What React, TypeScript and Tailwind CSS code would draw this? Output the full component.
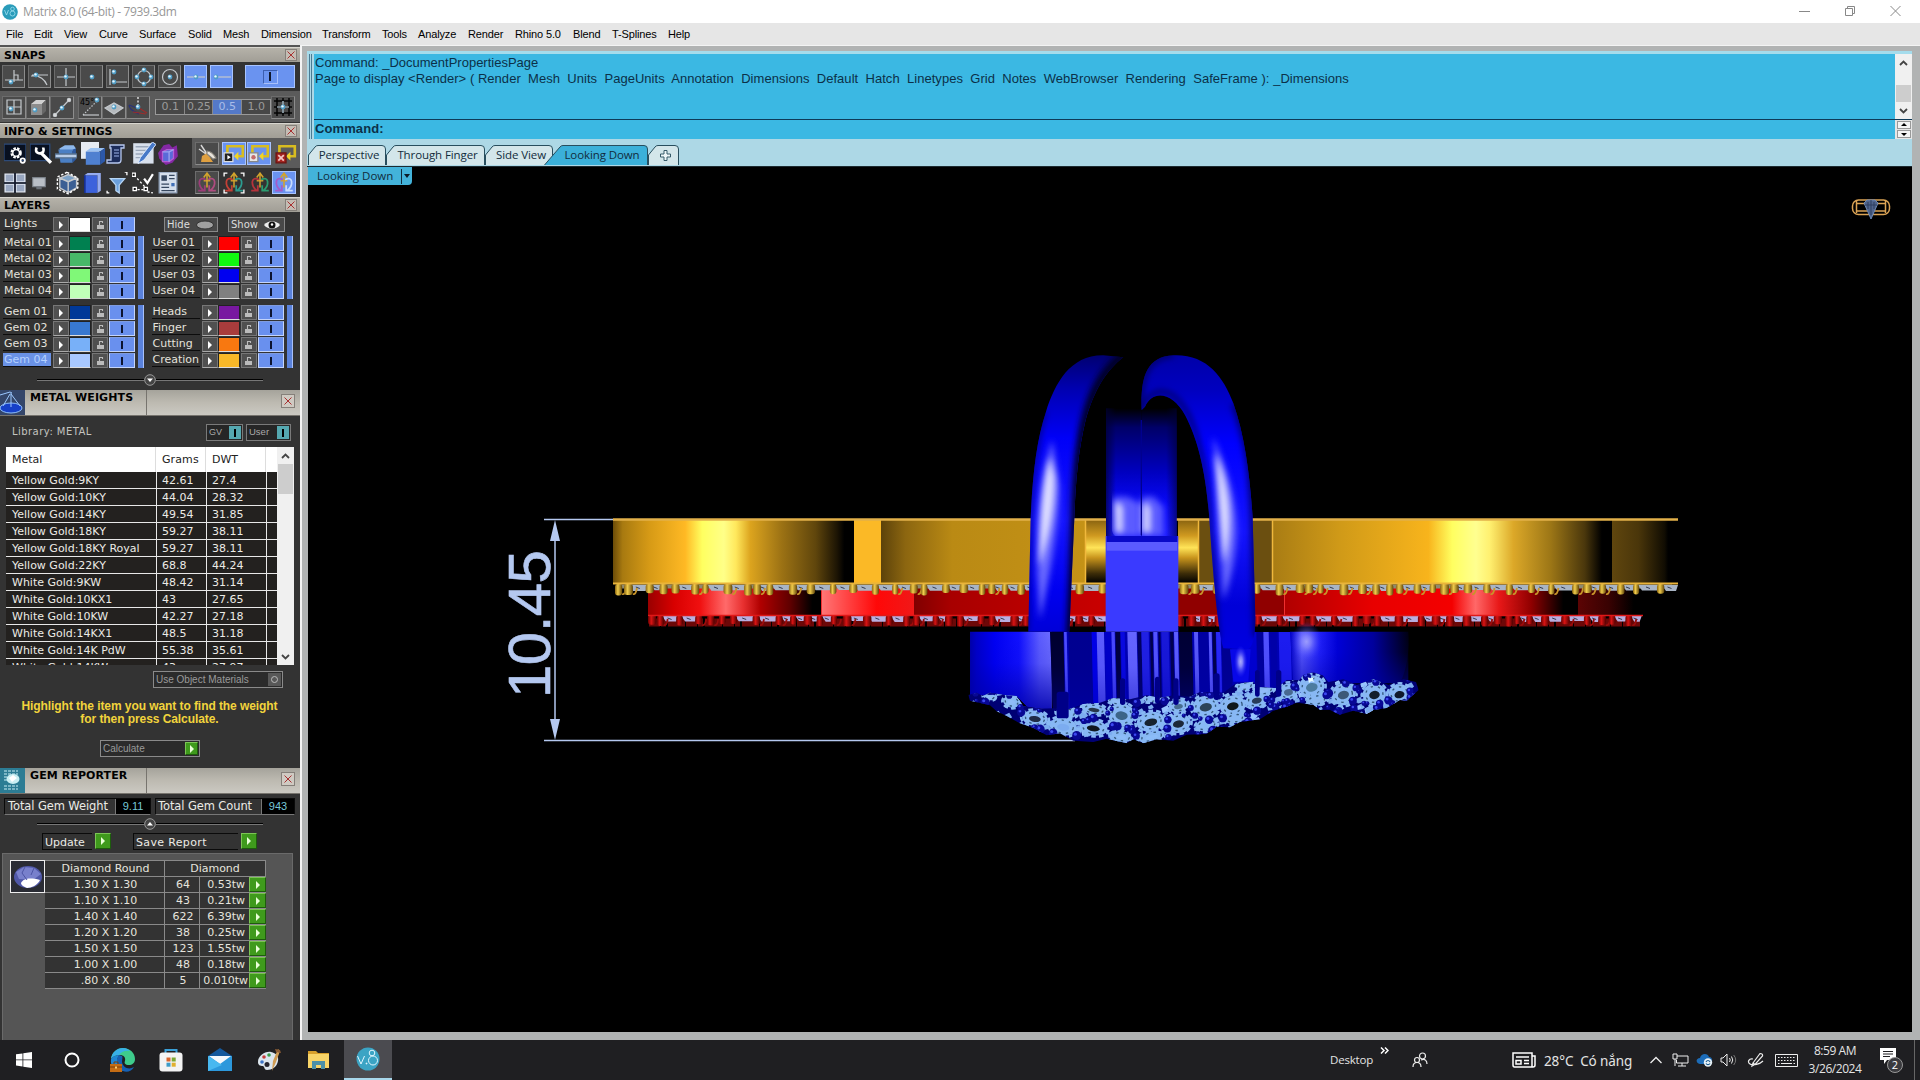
import type { ReactNode } from "react"
import clsx from "clsx"

const menus: [string, number][] = [
  ["File", 28], ["Edit", 30], ["View", 35], ["Curve", 40], ["Surface", 49], ["Solid", 35], ["Mesh", 38],
  ["Dimension", 61], ["Transform", 60], ["Tools", 36], ["Analyze", 50], ["Render", 47], ["Rhino 5.0", 58],
  ["Blend", 39], ["T-Splines", 56], ["Help", 30],
]

const metals = [
  ["Yellow Gold:9KY", "42.61", "27.4"],
  ["Yellow Gold:10KY", "44.04", "28.32"],
  ["Yellow Gold:14KY", "49.54", "31.85"],
  ["Yellow Gold:18KY", "59.27", "38.11"],
  ["Yellow Gold:18KY Royal", "59.27", "38.11"],
  ["Yellow Gold:22KY", "68.8", "44.24"],
  ["White Gold:9KW", "48.42", "31.14"],
  ["White Gold:10KX1", "43", "27.65"],
  ["White Gold:10KW", "42.27", "27.18"],
  ["White Gold:14KX1", "48.5", "31.18"],
  ["White Gold:14K PdW", "55.38", "35.61"],
  ["White Gold:14KW", "43", "27.97"],
]

const gems = [
  ["1.30 X 1.30", "64", "0.53tw"],
  ["1.10 X 1.10", "43", "0.21tw"],
  ["1.40 X 1.40", "622", "6.39tw"],
  ["1.20 X 1.20", "38", "0.25tw"],
  ["1.50 X 1.50", "123", "1.55tw"],
  ["1.00 X 1.00", "48", "0.18tw"],
  [".80 X .80", "5", "0.010tw"],
]

const layerGroups = [
  [
    [["Metal 01", "#008050"], ["Metal 02", "#48b868"], ["Metal 03", "#80f878"], ["Metal 04", "#c0ffb8"]],
    [["User 01", "#ff0000"], ["User 02", "#10f810"], ["User 03", "#0000f0"], ["User 04", "#808080"]],
  ],
  [
    [["Gem 01", "#003898"], ["Gem 02", "#3878d0"], ["Gem 03", "#78b0f8"], ["Gem 04", "#a8c8ff"]],
    [["Heads", "#7818a0"], ["Finger", "#a83c3c"], ["Cutting", "#f87810"], ["Creation", "#f8b828"]],
  ],
]

// small repeatable generator so the pavé looks the same on each render
function seeded(seed: number) {
  let s = seed
  return () => {
    s = (s * 16807) % 2147483647
    return s / 2147483647
  }
}

function CloseBox() {
  return (
    <div className="flex h-3 w-3 items-center justify-center border border-[#85807a] bg-[#c4bdb4]">
      <svg width="8" height="8" viewBox="0 0 8 8" stroke="#a83030" strokeWidth="1"><path d="M.5 .5l7 7M7.5 .5l-7 7" /></svg>
    </div>
  )
}

function SectionBar({ title }: { title: string }) {
  return (
    <div className="flex h-[15px] w-[300px] shrink-0 items-center justify-between border-t border-[#d8d6cf] bg-gradient-to-b from-[#b5b2a9] to-[#a19e96] pr-[3px] pl-1">
      <span className="text-[11px] leading-none font-bold text-black">{title}</span>
      <CloseBox />
    </div>
  )
}

function PanelBar({ title, icon }: { title: string; icon: ReactNode }) {
  return (
    <div className="flex h-[26px] w-[300px] shrink-0 border-b border-[#77746e] bg-gradient-to-b from-[#a5a39b] via-[#bdbab1] to-[#cbc9c2]">
      <div className="h-[25px] w-[25px]">{icon}</div>
      <div className="w-[122px] border-r border-[#77746e] pt-px pl-[5px] text-[11px] leading-[13px] font-bold tracking-[0.1px] text-black">{title}</div>
      <div className="flex flex-1 items-start justify-end pt-1 pr-[5px]">
        <div className="flex h-[14px] w-[14px] items-center justify-center border border-[#85807a] bg-[#cfcac2]">
          <svg width="8" height="8" viewBox="0 0 8 8" stroke="#a83030"><path d="M.5 .5l7 7M7.5 .5l-7 7" /></svg>
        </div>
      </div>
    </div>
  )
}

function Btn({ children, on, w = "w-[23px]", className }: { children?: ReactNode; on?: boolean; w?: string; className?: string }) {
  return (
    <div
      className={clsx(
        "flex h-[23px] shrink-0 items-center justify-center border",
        w,
        on ? "border-[#a8c4ff] bg-[#6a93f0]" : "border-[#8c8c8c] border-t-[#6c6c6c] border-l-[#6c6c6c] bg-[#4a4a4a]",
        className,
      )}
    >
      {children}
    </div>
  )
}

function Ico({ children, size = 20 }: { children: ReactNode; size?: number }) {
  return <svg width={size} height={size} viewBox="0 0 20 20" fill="none" stroke="#c4c8cc" strokeWidth="1.2" className="shrink-0">{children}</svg>
}

function Dot({ x, y }: { x: number; y: number }) {
  return (
    <g stroke="none">
      <circle cx={x} cy={y} r="2.4" fill="#4f9cc4" />
      <circle cx={x - 0.5} cy={y - 0.6} r="1.2" fill="#e6f7ff" />
    </g>
  )
}

function Snaps() {
  return (
    <>
      <div className="flex h-[29px] shrink-0 items-center gap-[3px] bg-[#333] pl-[2px]">
        <Btn><Ico><path d="M1 13h18M10 3v12M10 8h4v5" /><Dot x={7} y={15} /></Ico></Btn>
        <Btn><Ico><path d="M1 9c8-1 13 2 16 9M2 8h16" /><Dot x={6} y={8} /></Ico></Btn>
        <Btn><Ico><path d="M1 10h18M10 1v18" /><Dot x={10} y={10} /></Ico></Btn>
        <Btn><Ico><Dot x={10} y={10} /></Ico></Btn>
        <Btn><Ico><path d="M2 2v16M5 15h14" /><Dot x={6} y={5} /><Dot x={6} y={15} /></Ico></Btn>
        <Btn><Ico><circle cx="10" cy="10" r="6.5" /><Dot x={10} y={3} /><Dot x={10} y={17} /><Dot x={3} y={10} /><Dot x={17} y={10} /></Ico></Btn>
        <Btn><Ico><circle cx="10" cy="10" r="7.5" /><Dot x={10} y={10} /></Ico></Btn>
        <Btn on><Ico><path d="M1 10h18" /><Dot x={10} y={10} /></Ico></Btn>
        <Btn on><Ico><path d="M5 10h14" /><Dot x={4} y={10} /></Ico></Btn>
        <Btn on w="w-[50px]" className="ml-[9px]">
          <div className="flex h-[14px] w-[15px] items-center justify-center border border-[#a9c0fa] border-t-[#3b5eb0] border-l-[#3b5eb0]">
            <div className="h-[9px] w-[2px] bg-[#10182c]" />
          </div>
        </Btn>
      </div>
      <div className="flex h-[31px] shrink-0 items-center bg-[#5b5b5b] pt-px pl-[2px]">
        <Btn w="w-6" className="h-6"><Ico><path d="M3 3h14v14H3zM10 3v14M3 10h14" /><Dot x={7} y={12} /></Ico></Btn>
        <Btn w="w-6" className="h-6">
          <Ico><path d="M3 7l5-4h10l-4 4z" fill="#d0d0d0" stroke="none" /><path d="M3 7h11v11H3z" fill="#8c8c8c" stroke="none" /><path d="M14 7l4-4v11l-4 4z" fill="#666" stroke="none" /><Dot x={7} y={13} /></Ico>
        </Btn>
        <Btn w="w-6" className="h-6"><Ico><path d="M3 18L17 3" /><Dot x={10} y={11} /><circle cx="17" cy="3" r="1.6" fill="#ddd" /><circle cx="3" cy="18" r="1.6" fill="#ddd" /></Ico></Btn>
        <Btn w="w-6" className="ml-1 h-6">
          <Ico>
            <path d="M3 18h16" /><path d="M3 18L17 4" strokeDasharray="1.5 1.5" /><Dot x={17} y={3} />
            <text x="0" y="8" fontSize="8" stroke="none" fill="#000">45°</text>
          </Ico>
        </Btn>
        <Btn w="w-6" className="h-6"><Ico><path d="M1 11l9-5 9 5-9 6z" fill="#b5b9bd" /><Dot x={10} y={10} /></Ico></Btn>
        <Btn w="w-6" className="h-6"><Ico><path d="M10 0v10" strokeDasharray="2 1.5" stroke="#fff" /><path d="M9 11L1 8M1 8c0 5 6 7 10 9" stroke="#29337a" /><path d="M11 11l8 5M5 15l13 2" stroke="#9c2b2b" /><Dot x={10} y={10} /></Ico></Btn>
        <div className="ml-[5px] flex h-4 w-[116px] border border-[#999] text-center text-[11px] leading-[14px] text-[#9a9a9a]">
          <div className="w-[29px] bg-[#474747]">0.1</div>
          <div className="w-[29px] border-x border-[#888] bg-[#474747] tracking-[-0.3px]">0.25</div>
          <div className="w-[29px] bg-[#5479c8] text-[#a9bde8]">0.5</div>
          <div className="w-[29px] border-l border-[#888] bg-[#474747]">1.0</div>
        </div>
        <Btn w="w-6" className="h-6"><Ico><path d="M4 1v18M10 1v18M16 1v18M1 4h18M1 10h18M1 16h18" stroke="#050505" strokeWidth="1.5" /><path d="M4 10h12M10 4v12" stroke="#cfe8f5" /><Dot x={10} y={10} /></Ico></Btn>
      </div>
    </>
  )
}

function Loop({ mark }: { mark: ReactNode }) {
  return (
    <Ico size={22}>
      <path d="M4 12V3h14v9h-5" stroke="#d8bc20" strokeWidth="2.4" />
      <path d="M14 8v8l-4-4z" fill="#f0d428" stroke="none" />
      {mark}
    </Ico>
  )
}

function Arrows({ a, b, frame }: { a: string; b: string; frame?: boolean }) {
  return (
    <Ico size={22}>
      <path d="M10 14V2M7 5l3-4 3 4M7 8h6" stroke="#d2a32c" strokeWidth="1.4" />
      <path d="M9 7C2 3 1 12 7 17M2 17h6v-5" stroke={a} strokeWidth="1.6" />
      <path d="M11 7c7-4 8 5 2 10M18 17h-6v-5" stroke={b} strokeWidth="1.6" />
      {frame && <path d="M1 4V1h3M16 1h3v3M1 16v3h3M16 19h3v-3" stroke="#fff" />}
    </Ico>
  )
}

function InfoSettings() {
  return (
    <div className="flex h-[59px] shrink-0 justify-between bg-[#333]">
      <div className="grid grid-cols-[repeat(7,25.5px)] grid-rows-2 items-center pt-px pl-1">
        <Ico size={22}>
          <path d="M0 1h20v15H0z" fill="#081020" stroke="#2c4a78" />
          <circle cx="11" cy="9" r="4" stroke="#fff" strokeWidth="2.4" strokeDasharray="2.2 1" /><circle cx="11" cy="9" r="3" stroke="#fff" />
          <circle cx="17" cy="16" r="2" stroke="#fff" strokeWidth="1.6" />
        </Ico>
        <Ico size={22}><path d="M0 1h18v15H0z" fill="#081020" stroke="#2c4a78" /><path d="M10 9l9 9" stroke="#fff" strokeWidth="3" /><path d="M6 4c-2 5 3 7 6 4 1-2 0-3 0-4" stroke="#fff" strokeWidth="2.4" /></Ico>
        <Ico size={22}><path d="M4 5l5-3h8l2 3-4 3H5z" fill="#8db8ec" stroke="none" /><path d="M3 6h13v12H5z" fill="#4a7fc4" stroke="none" /><path d="M16 6l3-1v10l-3 3z" fill="#2c58a0" stroke="none" /><path d="M0 10h20v3.500H0z" fill="#b9cde8" stroke="#56708f" /></Ico>
        <Ico size={24}><path d="M0 0h15v14H0z" fill="#e6ebf2" stroke="none" /><path d="M4 8l4-3h12l-4 3z" fill="#9bc2f2" stroke="none" /><path d="M4 8h12v11H4z" fill="#4f80d0" stroke="none" /><path d="M16 8l4-3v11l-4 3z" fill="#2c58a8" stroke="none" /></Ico>
        <Ico size={20}><path d="M4 1h14v3h-3v12q0 3-3 3H1v-3h4V4H4z" fill="#1c2c5a" stroke="#b7c8ee" strokeWidth="1.3" /><path d="M8 6h5M8 9h5M8 12h5" stroke="#9db4ea" /></Ico>
        <Ico size={24}><path d="M1 1h17v17H1z" fill="#d8e0ec" stroke="none" /><path d="M3 4h12M3 7h9M3 10h7M3 13h4" stroke="#9aa7ba" /><path d="M20 2L10 15l-5 3 2-5L17 0z" fill="#4779c8" stroke="#dfeafc" strokeWidth=".8" /></Ico>
        <Ico size={22}><path d="M1 9l5-7 5-1 3 3 4-2 1 10-5 6-6 2-6-6z" fill="#8428a4" stroke="none" /><path d="M5 8l4-2h6v8l-4 3H5z" fill="#5a6ad8" stroke="#b35fd4" /><path d="M5 8h6v9M11 8l4-2" stroke="#9ca4f0" /></Ico>

        <Ico size={22}><path d="M1 2h8v7H1zM11 2h8v7h-8zM1 11h8v7H1zM11 11h8v7h-8z" fill="#98a6bf" stroke="#dfe6f2" /><path d="M10 1v18M0 10h20" stroke="#10182c" strokeWidth="1.500" /></Ico>
        <Ico size={18}><path d="M3 4h14v10H3z" fill="#b9bfc6" stroke="#7c838b" /><path d="M7 14h6v3H7z" fill="#6c7279" stroke="none" /></Ico>
        <Ico size={24}><path d="M4 6l7-3 7 3-7 3z" fill="#7ca2c8" /><path d="M4 6v8l7 4V9zM18 6v8l-7 4V9z" fill="#3b5f94" /><path d="M10 1L2 5v10l9 4 8-5V6z" stroke="#fff" strokeDasharray="2 1.4" /></Ico>
        <Ico size={22}><path d="M3 3h12v16H3z" fill="#3c62dc" stroke="none" /><path d="M3 3l3-2h12l-3 2zM15 3l3-2v16l-3 2z" fill="#96acf0" stroke="none" /><path d="M3.500 3v16" stroke="#172f90" strokeWidth="1.500" /></Ico>
        <Ico size={22}><path d="M4 6h13l-5 6v7l-3-2v-5z" fill="#6ba0dc" stroke="#b7d6f5" /><path d="M17 0h2v3M1 17v2h2" stroke="#fff" /></Ico>
        <Ico size={22}><path d="M2 3l12 13" strokeDasharray="2 2" stroke="#fff" /><path d="M0 1h3v3H0zM1 14h3v3H1zM11 14h3v3h-3z" stroke="#fff" fill="#111" /><path d="M5 16h6M14 18l5 1" stroke="#fff" strokeDasharray="2 1.5" /><path d="M11 6l3 4 5-8" stroke="#fff" strokeWidth="2" /></Ico>
        <Ico size={22}><path d="M2 0h16v19H2z" fill="#d6dfec" stroke="#8fa0b8" /><path d="M4 3h5v5H4z" fill="#36475f" stroke="none" /><path d="M11 3h5M11 6h5M4 11h7M4 14h7M4 17h12" stroke="#36475f" /><path d="M13 10h3v3h-3z" fill="#4170b8" stroke="none" /></Ico>
      </div>
      <div className="w-[108px]">
        <div className="flex h-[30px] items-center gap-px bg-[#5b5b5b] pt-px pl-[3px]">
          <Btn w="w-6" className="h-6 bg-[#3c3c3c]">
            <Ico><path d="M4 1l6 9M2 5l7 5" stroke="#d8d8d8" strokeWidth="1.400" /><path d="M5 12l5-3 6 9H4z" fill="#e0a040" stroke="none" /><path d="M10 7c2 0 6 2 9 7l-3 1-6-5z" fill="#e9e4dc" stroke="#8a857c" /></Ico>
          </Btn>
          <Btn on w="w-6" className="ml-[2px] h-6"><Loop mark={<><path d="M1 9h8v8H1z" fill="#222" stroke="#ddd" /><path d="M4 11v4l3-2z" fill="#fff" stroke="none" /></>} /></Btn>
          <Btn on w="w-6" className="h-6"><Loop mark={<><path d="M1 9h8v8H1z" fill="#e6e6e6" stroke="#888" /><circle cx="5" cy="13" r="2" fill="#c46a6a" stroke="none" /></>} /></Btn>
          <div className="pl-[3px]"><Loop mark={<><path d="M1 9h9v9H1z" fill="#a52420" stroke="#6c1512" /><path d="M3 11l5 5M8 11l-5 5" stroke="#f2c6c2" strokeWidth="1.6" /></>} /></div>
        </div>
        <div className="flex h-[29px] items-center pl-[3px]">
          <Btn w="w-6" className="h-6"><Arrows a="#9c3c78" b="#b04c80" /></Btn>
          <div className="flex w-[29px] justify-center"><Arrows a="#c44036" b="#2c9c90" frame /></div>
          <div className="flex w-[24px] justify-center"><Arrows a="#b5343c" b="#2c9c70" /></div>
          <Btn on w="w-6" className="h-6"><Arrows a="#a45cc8" b="#c8dcff" /></Btn>
        </div>
      </div>
    </div>
  )
}

function LayerRow({ name, color }: { name: string; color: string }) {
  const selected = name === "Gem 04"
  return (
    <div className="flex h-4">
      <div className={clsx("h-[14px] w-12 border-b border-[#0c0c0c] pl-px text-[11px] leading-[13px] whitespace-nowrap", selected ? "bg-[#6a92e6] text-[#b4d0ff]" : "text-[#e4e2dc]")}>{name}</div>
      <div className="ml-0.5 flex h-[15px] w-4 items-center justify-center border border-[#777] border-b-[#aaa] bg-[#505050]"><div className="h-0 w-0 border-y-[4px] border-l-[4px] border-y-transparent border-l-white" /></div>
      <div className="h-[15px] w-[22px] border border-[#222] border-b-[#ddd]" style={{ backgroundColor: color }} />
      <div className="ml-px flex h-[15px] w-4 items-center justify-center border border-[#777] bg-[#505050]">
        <svg width="9" height="10" viewBox="0 0 9 10" fill="#bbb"><path d="M1 5h7v4H1z" /><path d="M3.500 5V1.500h3V3" fill="none" stroke="#bbb" strokeWidth="1.100" /></svg>
      </div>
      <div className="ml-px flex h-[15px] w-[26px] items-center justify-center border border-[#c3d4fb] border-t-[#7f9ce0] bg-[#6990ee]"><div className="h-2 w-[2px] bg-[#0c1430]" /></div>
    </div>
  )
}

function LayerGroup({ rows }: { rows: string[][] }) {
  return (
    <div className="flex h-16 w-[151px] gap-[3px]">
      <div className="w-[132px]">
        {rows.map(([name, color]) => <LayerRow key={name} name={name} color={color} />)}
      </div>
      <div className="h-[63px] w-[6px] border-r border-[#a7c0fb] bg-[#5a82dc]" />
    </div>
  )
}

function Slider({ up }: { up?: boolean }) {
  return (
    <div className="flex items-center justify-center">
      <div className="h-[2px] w-[107px] border-t border-[#000] bg-[#777]" />
      <svg width="12" height="12" viewBox="0 0 12 12"><circle cx="6" cy="6" r="5.300" fill="#444" stroke="#999" /><path d={up ? "M3 7.500h6L6 4z" : "M3 4.500h6L6 8z"} fill="#fff" /></svg>
      <div className="h-[2px] w-[107px] border-t border-[#000] bg-[#777]" />
    </div>
  )
}

function Layers() {
  return (
    <div className="h-[178px] shrink-0 bg-[#333]">
      <div className="flex h-6 pt-[5px] pl-[3px]">
        <div className="w-[161px]"><LayerRow name="Lights" color="#ffffff" /></div>
        <div className="flex h-[15px] w-[54px] items-center justify-between border border-[#888] bg-[#484848] pr-[3px] pl-0.5 text-[10px] leading-[13px] text-[#ddd]">
          Hide<svg width="18" height="10" viewBox="0 0 18 10"><ellipse cx="9" cy="5" rx="8.500" ry="4" fill="#a0a0a0" stroke="#333" /></svg>
        </div>
        <div className="ml-[10px] flex h-[15px] w-[57px] items-center justify-between border border-[#888] bg-[#484848] pr-[3px] pl-0.5 text-[10px] leading-[13px] text-[#ddd]">
          Show<svg width="18" height="10" viewBox="0 0 18 10"><path d="M1 5c4-5 12-5 16 0-4 5-12 5-16 0z" fill="#eee" /><circle cx="9" cy="5" r="3.500" fill="#111" /><circle cx="9" cy="4.500" r="1.200" fill="#fff" /></svg>
        </div>
      </div>
      {layerGroups.map((cols, i) => (
        <div key={i} className={clsx("flex pl-[3px]", i === 1 && "mt-[5px]")}>
          {cols.map((rows) => <LayerGroup key={rows[0][0]} rows={rows} />)}
        </div>
      ))}
      <div className="mt-[5px]"><Slider /></div>
    </div>
  )
}

function GreenArrow({ className = "h-[15px] w-[15px]" }: { className?: string }) {
  return (
    <div className={clsx("flex shrink-0 items-center justify-center border border-[#7cc455] border-r-[#1d5c0c] border-b-[#1d5c0c] bg-[#3f9a1c]", className)}>
      <div className="h-0 w-0 border-y-[4px] border-l-[4px] border-y-transparent border-l-[#eaffd8]" />
    </div>
  )
}

function Chevron({ down }: { down?: boolean }) {
  return <svg width="9" height="6" viewBox="0 0 9 6" fill="none" stroke="#444" strokeWidth="1.800"><path d={down ? "M1 1l3.500 3.500L8 1" : "M1 5l3.500-3.500L8 5"} /></svg>
}

function MetalWeights() {
  return (
    <>
      <PanelBar
        title="METAL WEIGHTS"
        icon={<svg width="25" height="25" viewBox="0 0 25 25" fill="none"><path d="M0 0h25v25H0z" fill="#34466a" /><ellipse cx="11" cy="18" rx="11" ry="5" fill="#1640c8" stroke="#8fc0ff" /><path d="M0 5l10-3 2 1M10 4L3 16M11 4l9 12M11 3l0 14" stroke="#9cc8ff" /></svg>}
      />
      <div className="h-[352px] shrink-0 bg-[#333]">
        <div className="flex h-[31px] items-start pt-2 pl-3">
          <span className="w-[194px] text-[10px] leading-[15px] tracking-[0.45px] text-[#c4c4c0]">Library: METAL</span>
          <div className="flex h-[17px] w-[37px] items-center justify-between border border-[#7a7a7a] bg-[#262626] pr-px pl-0.5 font-['Liberation_Sans'] text-[9px] text-[#aaa]">GV<span className="flex h-[13px] w-3 items-center justify-center bg-[#55a8b0]"><i className="h-2 w-[2px] bg-black" /></span></div>
          <div className="ml-[3px] flex h-[17px] w-[45px] items-center justify-between border border-[#7a7a7a] bg-[#262626] pr-px pl-0.5 font-['Liberation_Sans'] text-[9.500px] text-[#aaa]">User<span className="flex h-[13px] w-3 items-center justify-center bg-[#55a8b0]"><i className="h-2 w-[2px] bg-black" /></span></div>
        </div>
        <div className="ml-1.5 flex h-[218px] w-[288px] overflow-hidden">
          <div className="w-[271px] text-[11px]">
            <div className="grid h-[25px] grid-cols-[150px_50px_60px_11px] bg-white leading-[25px] text-[#222]">
              <span className="border-r border-[#ddd] pl-1.5">Metal</span>
              <span className="border-r border-[#ddd] pl-1.5 tracking-[0.1px]">Grams</span>
              <span className="border-r border-[#ddd] pl-1.5">DWT</span>
            </div>
            {metals.map(([name, g, d]) => (
              <div key={name} className="grid h-[17px] grid-cols-[151px_50px_60px_10px] border-b border-[#e8e8e8] bg-[#23211f] leading-[18px] whitespace-nowrap text-[#ecebe6]">
                <span className="border-r border-[#e8e8e8] pl-1.5">{name}</span>
                <span className="border-r border-[#e8e8e8] pl-[5px]">{g}</span>
                <span className="border-r border-[#e8e8e8] pl-[5px]">{d}</span>
              </div>
            ))}
          </div>
          <div className="flex flex-1 flex-col items-center bg-[#f0f0f0]">
            <div className="flex h-[17px] items-center"><Chevron /></div>
            <div className="h-[30px] w-[15px] bg-[#cdcdcd]" />
            <div className="mt-auto flex h-[17px] items-center"><Chevron down /></div>
          </div>
        </div>
        <div className="mt-[6px] ml-[153px] flex h-[17px] w-[130px] items-center justify-between border border-[#8a8a8a] bg-[#2b2b2b] pr-px pl-[2px] font-['Liberation_Sans'] text-[10px] whitespace-nowrap text-[#9a9a9a]">
          Use Object Materials
          <span className="flex h-[13px] w-[13px] items-center justify-center bg-[#585858]"><i className="h-[7px] w-[7px] rounded-full border border-[#bbb]" /></span>
        </div>
        <p className="mt-[12px] pr-px text-center font-['Liberation_Sans'] text-[12px] leading-[13px] font-bold tracking-[-0.07px] text-[#f2d43c]">
          Highlight the item you want to find the weight<br />for then press Calculate.
        </p>
        <div className="mt-[14px] ml-[100px] flex h-[17px] w-[100px] items-center justify-between border border-[#8a8a8a] bg-[#2b2b2b] pr-px pl-[2px] font-['Liberation_Sans'] text-[10px] text-[#9a9a9a]">
          Calculate<GreenArrow className="h-[13px] w-[13px]" />
        </div>
      </div>
    </>
  )
}

function GemReporter() {
  return (
    <>
      <PanelBar
        title="GEM REPORTER"
        icon={<svg width="25" height="25" viewBox="0 0 25 25"><path d="M0 0h25v25H0z" fill="#2c7c94" /><path d="M4 3h14M4 6h14M4 18h14M4 21h14M4 9h4M4 12h3" stroke="#c8eef5" strokeDasharray="3 1" /><ellipse cx="13" cy="11" rx="6.500" ry="5" fill="#c9eef2" /><path d="M9 10l4-3 4 3-5 4z" fill="#fff" /></svg>}
      />
      <div className="flex h-[247px] shrink-0 flex-col bg-[#333]">
        <div className="flex h-[21px] items-end gap-1 pl-1 text-[11.500px] leading-[15px] whitespace-nowrap text-[#ecebe6]">
          <div className="flex h-[17px] w-[147px] border border-[#0a0a0a] border-b-[#777] pl-[3px]">
            <span className="w-[107px] tracking-[-0.1px]">Total Gem Weight</span><span className="flex-1 border-l border-[#777] bg-black text-center font-['Liberation_Sans'] text-[11px] text-[#78c8d8]">9.11</span>
          </div>
          <div className="flex h-[17px] w-[140px] border border-[#0a0a0a] border-b-[#777] pl-[2px]">
            <span className="w-[103px] tracking-[-0.1px]">Total Gem Count</span><span className="flex-1 border-l border-[#777] bg-black text-center font-['Liberation_Sans'] text-[11px] text-[#78c8d8]">943</span>
          </div>
        </div>
        <div className="mt-[3px]"><Slider up /></div>
        <div className="mt-[3px] flex h-[17px] pl-[42px] text-[11px] leading-[17px] text-[#ecebe6]">
          <div className="h-[17px] w-[50px] border border-r-0 border-[#0a0a0a] pl-[2px]">Update</div>
          <div className="ml-[3px]"><GreenArrow className="h-4 w-4" /></div>
          <div className="ml-[22px] h-[17px] w-[105px] border border-r-0 border-[#0a0a0a] pl-[2px] tracking-[0.35px]">Save Report</div>
          <div className="ml-[3px]"><GreenArrow className="h-4 w-4" /></div>
        </div>
        <div className="mt-[3px] ml-[2px] flex w-[291px] flex-1 items-start border border-b-0 border-[#6a6a6a] bg-[#555] pt-[6px] pl-[7px]">
          <div className="flex h-[33px] w-[35px] items-center justify-center border border-[#eee] bg-[#2a2c34]">
            <svg width="30" height="26" viewBox="0 0 30 26"><ellipse cx="15" cy="13" rx="14" ry="11" fill="#5058a8" /><path d="M3 8l8-5 10 1 7 6-8 6-14-1z" fill="#7880cc" /><path d="M8 19c2-4 8-6 19-3-2 5-9 8-13 8-3-1-6-3-6-5z" fill="#fff" /><path d="M12 3l-3 6 5 7M21 4l-3 7" fill="none" stroke="#4c54a4" /></svg>
          </div>
          <div className="w-[221px] border-t border-[#8a8a8a] text-center text-[11px] leading-[16px] text-[#e6e4de]">
            <div className="grid h-4 grid-cols-[119px_102px] border-b border-[#8a8a8a] bg-[#333]">
              <span className="pl-[2px] leading-[15px]">Diamond Round</span>
              <span className="border-x border-[#8a8a8a] leading-[15px]">Diamond</span>
            </div>
            {gems.map(([size, count, weight]) => (
              <div key={size} className="grid h-4 grid-cols-[119px_36px_49px_17px] border-b border-[#8a8a8a] bg-[#333] leading-[15px] whitespace-nowrap">
                <span className="pl-[2px]">{size}</span>
                <span className="border-x border-[#8a8a8a] pl-[2px]">{count}</span>
                <span className={clsx("text-right", weight.length > 6 ? "pr-px" : "pr-[4px]")}>{weight}</span>
                <GreenArrow className="h-[15px] w-[17px]" />
              </div>
            ))}
          </div>
        </div>
      </div>
    </>
  )
}

function CommandPanel() {
  return (
    <div className="flex h-[88px] w-[1605px] border-t-[3px] border-[#a5dcec] bg-[#add8e6] pl-[2px] font-['Liberation_Sans'] text-[#0c3048]">
      <div className="h-[85px] w-[3px] border-x border-[#4a7c94]" />
      <div className="ml-[2px] w-[1581px]">
        <div className="h-[65px] bg-[#3bb8e3] pt-px pl-px text-[13px] leading-[16px] whitespace-pre">
          <div>Command: _DocumentPropertiesPage</div>
          <div className="tracking-[0.038px]">{"Page to display <Render> ( Render  Mesh  Units  PageUnits  Annotation  Dimensions  Default  Hatch  Linetypes  Grid  Notes  WebBrowser  Rendering  SafeFrame ): _Dimensions"}</div>
        </div>
        <div className="h-5 border-t border-[#0e3a58] bg-[#3bb8e3] pl-px text-[13px] leading-[17px] font-bold tracking-[0.1px]">Command:</div>
      </div>
      <div className="flex w-[17px] flex-col">
        <div className="flex h-[65px] flex-col items-center bg-[#f0f0f0]">
          <div className="flex h-[17px] items-center"><Chevron /></div>
          <div className="mt-[14px] h-[17px] w-[15px] bg-[#cdcdcd]" />
          <div className="mt-auto flex h-[17px] items-center"><Chevron down /></div>
        </div>
        <div className="flex h-5 flex-col items-center justify-around border-t border-[#0e3a58] bg-[#e6e6e6]">
          <div className="flex h-2 w-[14px] items-center justify-center border border-[#999] bg-[#f4f4f4]"><i className="border-x-[3px] border-b-[3px] border-x-transparent border-b-black" /></div>
          <div className="flex h-2 w-[14px] items-center justify-center border border-[#999] bg-[#f4f4f4]"><i className="border-x-[3px] border-t-[3px] border-x-transparent border-t-black" /></div>
        </div>
      </div>
    </div>
  )
}

function Tab({ label, w, active }: { label: ReactNode; w: number; active?: boolean }) {
  const slant = active ? 18 : 9
  return (
    <div className={clsx("relative h-5 shrink-0", active && "-ml-[9px]")} style={{ width: w }}>
      <svg width={w} height="20" className="absolute inset-0">
        <path d={`M.5 20${active ? "" : "V10"}L${slant - 2} 2q1-1.500 3-1.500H${w - 4}q3.500 0 3.500 3.500V20`} fill={active ? "#3bb0d9" : "#d3e6ea"} stroke="#284e5e" />
      </svg>
      <span className={clsx("relative flex h-5 items-center justify-center font-['Open_Sans'] text-[11.500px] tracking-[-0.1px] whitespace-nowrap text-[#122c3c]", active ? "pl-[12px]" : "pl-1")}>{label}</span>
    </div>
  )
}

function Tabs() {
  return (
    <div className="flex h-[28px] w-[1605px] items-end border-b border-[#1c2a30] bg-[#add8e6] pb-px pl-px">
      <Tab label="Perspective" w={78} />
      <Tab label="Through Finger" w={99} />
      <Tab label="Side View" w={68} />
      <Tab label="Looking Down" w={104} active />
      <Tab w={31} label={<svg width="11" height="11" viewBox="0 0 11 11" fill="#eef6f8" stroke="#365a68"><path d="M4 .5h3V4h3.500v3H7v3.500H4V7H.5V4H4z" /></svg>} />
    </div>
  )
}

function Prongs({ from, to, y, kind }: { from: number; to: number; y: number; kind: "gold" | "red" }) {
  const rnd = seeded(kind === "gold" ? 41 : 97)
  const out: ReactNode[] = []
  let x = from + 2
  let i = 0
  while (x < to - 12) {
    const gap = Math.min(9 + rnd() * 15, to - x - 2)
    const w = 6 + rnd() * 3
    if (gap > 12) {
      out.push(<path key={`s${i}`} d={`M${x + 5} ${y}h${gap - 3}l-2 ${5 + rnd()}h${-(gap - 9)}z`} fill={kind === "gold" ? "#a8b4c4" : "#b8aee0"} />)
      out.push(<path key={`k${i}`} d={`M${x + gap / 2 + 1} ${y + 2}l4 1.500`} stroke="#333a50" strokeWidth="1" />)
    }
    out.push(<rect key={`p${i}`} x={x} y={y - 1} width={w} height={9 + rnd() * 2.500} rx="3" fill={`url(#${kind}Prong)`} />)
    if (rnd() > 0.55) out.push(<path key={`q${i}`} d={`M${x + w} ${y + 9}q3 1 4-6`} fill="none" stroke={kind === "gold" ? "#c8942a" : "#9c0c0c"} strokeWidth="1.800" />)
    x += gap
    i++
  }
  return <>{out}</>
}

const stones: [number, number, number, number, string][] = [
  [1115, 1040, 42, 38, "#4c7ca0"], [1210, 1063, 40, 36, "#3c5878"], [1303, 1063, 38, 36, "#14202c"], [1378, 1062, 36, 32, "#101a2c"],
  [1130, 1080, 36, 18, "#8cb8f0"], [545, 1125, 44, 38, "#3c6488"], [632, 1145, 46, 32, "#16222e"], [715, 1150, 40, 32, "#1c2838"],
  [797, 1100, 44, 36, "#2c4458"], [878, 1097, 42, 34, "#10181c"], [460, 1163, 46, 26, "#101820"], [462, 1108, 40, 18, "#28384c"],
  [285, 1135, 42, 26, "#202c48"], [370, 1160, 44, 30, "#7cacf0"], [635, 1190, 44, 18, "#8cbcf8"], [545, 1190, 34, 18, "#8cbcf8"],
  [715, 1098, 32, 22, "#486c90"], [950, 1080, 36, 26, "#283c58"], [1045, 1055, 32, 28, "#486890"], [215, 1085, 28, 20, "#90bcf8"],
  [970, 1052, 36, 14, "#90bcf8"], [800, 1155, 36, 20, "#88b8f4"], [885, 1135, 34, 16, "#88b8f4"], [380, 1118, 34, 18, "#88b8f4"],
  [148, 1070, 20, 12, "#90bcf8"], [530, 1083, 30, 12, "#90bcf8"], [640, 1075, 30, 12, "#90bcf8"], [915, 1038, 28, 14, "#90bcf8"],
]

function Pave() {
  const rnd = seeded(7)
  const at = () => {
    const x = 90 + rnd() * 1340
    const t = Math.min((x - 90) / 950, 1)
    const base = x > 1040 ? 1060 : 1070 + Math.sin(t * Math.PI) * 65
    return [x, base + (rnd() - 0.5) * 130]
  }
  return (
    <g clipPath="url(#paveClip)">
      <path d="M80 980H1450V1230H80z" fill="#000074" />
      {/* slivers of neighbouring facets */}
      {Array.from({ length: 200 }, (_, i) => {
        const [x, y] = at()
        const s = 7 + rnd() * 12
        return <path key={i} d={`M${x} ${y}l${s} ${-s * 0.5}l${s * 0.5} ${s * 0.8}l${-s * 0.4} ${s * 0.3}l${-s * 0.9} ${s * 0.2}z`} fill={i % 4 ? "#7cacf0" : "#98c4ff"} />
      })}
      {stones.map(([x, y, rx, ry, c], i) => (
        <g key={i} transform={`rotate(${x > 600 ? -12 : 8} ${x} ${y})`}>
          <ellipse cx={x} cy={y} rx={rx * 0.92} ry={ry * 0.9} fill="#88b8f4" />
          <ellipse cx={x} cy={y} rx={rx} ry={ry} fill="none" stroke="#88b8f4" strokeWidth="8" strokeDasharray="14 9" />
          <ellipse cx={x} cy={y} rx={rx * 0.68} ry={ry * 0.66} fill="none" stroke="#34587c" strokeWidth="4" strokeDasharray="7 15" />
          <ellipse cx={x} cy={y + 2} rx={rx * 0.42} ry={ry * 0.34} fill={c} />
        </g>
      ))}
      {Array.from({ length: 190 }, (_, i) => {
        const [x, y] = at()
        const r = 6 + rnd() * 8
        if (stones.some(([sx, sy, rx, ry]) => Math.hypot((x - sx) / rx, (y - sy) / ry) < 0.8)) return null
        return (
          <g key={`b${i}`}>
            <circle cx={x} cy={y} r={r} fill="#080894" />
            <circle cx={x - r * 0.3} cy={y - r * 0.3} r={r * 0.35} fill="#3c48f0" />
          </g>
        )
      })}
      <path d="M1103 1012l10 3 8-4-3 9 6 5-11-1-6 5z" fill="#e8fbff" />
    </g>
  )
}

const leftArch = "M265 875L272 535C278 400 290 300 318 215C345 130 390 45 490 46L550 52C500 90 462 150 437 240C412 340 406 450 403 535L388 875z"
const rightArch = "M605 210C602 120 615 50 700 46C800 42 850 110 880 190C915 290 930 410 938 535L946 830C946 900 935 927 920 928L850 925C835 870 822 750 808 535C798 400 775 300 735 225C700 160 640 145 615 200z"

const headFolds: [number, number, string][] = [
  [330, 40, "#000030"], [372, 8, "#4c4cff"], [385, 70, "#000090"], [455, 15, "#0000e8"], [470, 22, "#5c5cff"], [494, 18, "#0000c8"],
  [514, 10, "#4848ff"], [526, 14, "#00003c"], [542, 12, "#0808e0"], [562, 28, "#6464ff"], [592, 12, "#000060"], [604, 22, "#2020e4"],
  [630, 8, "#00004c"], [640, 12, "#5454ff"], [655, 6, "#000050"], [664, 22, "#1818d8"], [690, 10, "#000050"], [702, 12, "#5c5cff"],
  [716, 40, "#000034"], [762, 12, "#5858f8"], [775, 30, "#0000a0"], [806, 9, "#5c5cff"], [817, 10, "#000048"], [828, 14, "#2828f8"],
  [844, 30, "#000090"], [920, 28, "#0000d0"], [950, 20, "#00009c"], [970, 16, "#5050ff"], [990, 20, "#0000a8"], [1016, 36, "#1c1cf0"],
]

function grad(id: string, stops: [number, string][], vertical?: boolean) {
  return (
    <linearGradient id={id} x1="0" y1="0" x2={vertical ? "0" : "1"} y2={vertical ? "1" : "0"}>
      {stops.map(([o, c], i) => <stop key={i} offset={o} stopColor={c} />)}
    </linearGradient>
  )
}

function RingModel() {
  return (
    <svg width="1604" height="865" viewBox="308 167 1604 865" className="absolute inset-0">
      <defs>
        {grad("goldA", [[0, "#6c4c08"], [0.04, "#a87a10"], [0.15, "#d69a16"], [0.3, "#ffb924"], [0.37, "#ffff60"], [0.46, "#ffff88"], [0.51, "#ffe85c"], [0.57, "#dca41e"], [0.7, "#9c7214"], [0.84, "#60460c"], [0.93, "#1c1404"], [0.96, "#000"], [1, "#000"]])}
        {grad("goldB", [[0, "#5c420a"], [0.12, "#8c6610"], [0.35, "#ba8a14"], [1, "#c49216"]])}
        {grad("goldC", [[0, "#a87c14"], [0.2, "#d09a18"], [0.46, "#f8b41c"], [0.53, "#ffff60"], [0.6, "#ffff90"], [0.64, "#fff070"], [0.71, "#dca828"], [0.82, "#9c7616"], [0.92, "#4a370c"], [0.97, "#000"], [1, "#000"]])}
        {grad("goldD", [[0, "#60460e"], [0.4, "#4a360a"], [0.8, "#100c02"], [0.85, "#000"]])}
        {grad("goldV", [[0, "#8a6410"], [0.25, "#d09a20"], [0.44, "#ffe458"], [0.6, "#c8941c"], [0.85, "#3c2c08"], [1, "#000"]], true)}
        {grad("redA", [[0, "#900"], [0.15, "#d80000"], [0.3, "#f01010"], [0.45, "#ff6a6a"], [0.55, "#e83030"], [0.65, "#b00000"], [0.82, "#600000"], [0.95, "#000"], [1, "#000"]])}
        {grad("redB", [[0, "#ff7878"], [0.3, "#ff4040"], [0.6, "#ff0808"], [1, "#f01818"]])}
        {grad("redC", [[0, "#800000"], [0.1, "#a80000"], [0.5, "#c80000"], [0.7, "#900000"], [1, "#900000"]])}
        {grad("redD", [[0, "#b00000"], [0.3, "#e80000"], [0.57, "#f40000"], [0.65, "#ff6868"], [0.73, "#e81818"], [0.84, "#900000"], [0.95, "#000"], [1, "#000"]])}
        {grad("redE", [[0, "#5c0404"], [0.5, "#380202"], [0.9, "#000"]])}
        {grad("goldProng", [[0, "#8a6410"], [0.4, "#f0cc4c"], [1, "#604408"]])}
        {grad("redProng", [[0, "#6c0000"], [0.4, "#d81414"], [1, "#500000"]])}
        {grad("archL", [[0, "#000070"], [0.12, "#0000b0"], [0.3, "#0000f8"], [0.6, "#1414ff"], [0.85, "#0000f0"], [1, "#0000d8"]], true)}
        {grad("archR", [[0, "#0000a8"], [0.12, "#0000c0"], [0.3, "#0000ff"], [0.6, "#1414ff"], [0.85, "#0000d8"], [1, "#0000e0"]], true)}
        {grad("shank", [[0, "#000"], [0.15, "#000068"], [0.5, "#0000c0"], [0.75, "#0808f8"], [1, "#1818ff"]], true)}
        {grad("shade", [[0, "rgba(0,0,50,.7)"], [0.14, "rgba(0,0,50,0)"], [0.85, "rgba(0,0,50,0)"], [1, "rgba(0,0,50,.6)"]])}
        {grad("headL", [[0, "#0000a8"], [0.08, "#0000c8"], [0.3, "#0000f4"], [0.6, "#1010ff"], [0.85, "#5c5cff"], [1, "#6c6cff"]])}
        {grad("headR", [[0, "#0000c8"], [0.1, "#5858ff"], [0.25, "#2020f8"], [0.4, "#0000d8"], [0.7, "#00009c"], [1, "#000010"]])}
        {grad("fadeDown", [[0, "rgba(0,0,160,0)"], [0.4, "rgba(0,0,170,.1)"], [1, "rgba(0,0,170,.85)"]], true)}
        <radialGradient id="glint"><stop offset="0" stopColor="#d4d4ff" /><stop offset=".3" stopColor="#9c9cff" /><stop offset="1" stopColor="#3030ff" stopOpacity="0" /></radialGradient>
        <filter id="soft" x="-100%" y="-20%" width="300%" height="140%"><feGaussianBlur stdDeviation="9" /></filter>
        <clipPath id="archLClip"><path d={leftArch} /></clipPath>
        <clipPath id="archRClip"><path d={rightArch} /></clipPath>
        <clipPath id="shankClip"><path d="M515 300H603V588H525Q515 580 515 560zM606 300H700V560Q700 580 680 588H606z" /></clipPath>
        <clipPath id="foldClip"><path d="M330 875H1060V1056L1000 1080L880 1090L760 1110L500 1140H340z" /></clipPath>
        <clipPath id="paveClip">
          <path d="M85 1065L110 1058L128 1068L150 1058L200 1066L230 1068L250 1098L300 1106L340 1105L380 1110L430 1092L480 1088L520 1074L570 1078L620 1066L660 1074L700 1066L750 1070L780 1056L850 1058L885 1032L940 1025L955 1042L1010 1044L1040 1020L1078 1020L1090 1005L1118 997L1148 1006L1165 1026L1210 1018L1250 1034L1300 1018L1345 1034L1390 1018L1428 1026L1436 1050L1400 1082L1380 1080L1340 1104L1300 1110L1280 1122L1240 1112L1200 1124L1170 1110L1140 1110L1120 1094L1070 1088L1040 1100L1000 1112L960 1138L900 1146L870 1162L830 1160L800 1182L740 1184L700 1202L650 1198L610 1210L580 1198L560 1210L500 1196L460 1206L400 1202L360 1180L320 1186L280 1164L240 1150L200 1128L170 1114L150 1096L90 1082z" />
        </clipPath>
      </defs>

      {/* gold halo ring */}
      <rect x="613" y="520" width="241" height="63" fill="url(#goldA)" />
      <rect x="854" y="520" width="27" height="63" fill="#fbb926" />
      <rect x="881" y="520" width="204" height="63" fill="url(#goldB)" />
      <rect x="1085" y="520" width="21" height="63" fill="url(#goldV)" />
      <rect x="1178" y="520" width="20" height="63" fill="url(#goldV)" />
      <rect x="1199" y="520" width="73" height="63" fill="#6b4f10" />
      <rect x="1272" y="520" width="340" height="63" fill="url(#goldC)" />
      <rect x="1612" y="520" width="66" height="63" fill="url(#goldD)" />
      <path d="M1085.500 519v64M1198.500 519v64M1272.500 519v64" stroke="#f0b83c" strokeWidth="1.500" />
      <path d="M613 519.500H1678" stroke="#e2b04a" strokeWidth="2.500" />

      {/* red ring */}
      <rect x="648" y="588" width="173" height="27" fill="url(#redA)" />
      <rect x="821" y="588" width="93" height="27" fill="url(#redB)" />
      <rect x="914" y="588" width="371" height="27" fill="url(#redC)" />
      <rect x="1285" y="588" width="293" height="27" fill="url(#redD)" />
      <rect x="1578" y="588" width="62" height="27" fill="url(#redE)" />
      <path d="M1284.500 590v25M821.500 590v25" stroke="#f03030" />
      <path d="M649 622.500H1640" stroke="#6c0808" strokeWidth="8" strokeDasharray="11 1 5 2 17 1" />
      <Prongs from={646} to={1644} y={616} kind="red" />
      <path d="M648 615.500H1643" stroke="#e01818" strokeWidth="1.500" />
      <path d="M618 586.500H1672" stroke="#8f8a70" strokeWidth="4" />
      <Prongs from={613} to={1678} y={585} kind="gold" />
      <path d="M613 583.500H1678" stroke="#eab43a" strokeWidth="2" />

      {/* dimension */}
      <g stroke="#b4c8f0" fill="#b4c8f0">
        <path d="M544 519.500H613M544 740.500H1075M555 525V735" strokeWidth="1.500" />
        <path d="M555 520l5 21h-10zM555 740l5-21h-10z" stroke="none" />
        <text transform="translate(549.500 698) rotate(-90)" fontSize="60" strokeWidth=".6" fontFamily="Liberation Sans, Arial, sans-serif" textLength="148">10.45</text>
      </g>

      {/* pendant */}
      <g transform="translate(940 340) scale(.33333)">
        <path d="M90 875H335V1110L262 1100L230 1068L90 1066z" fill="url(#headL)" />
        <path d="M90 875H335V1110L262 1100L230 1068L90 1066z" fill="url(#fadeDown)" />
        <g clipPath="url(#foldClip)">
          <path d="M330 875H1060V1140H330z" fill="#0000b4" />
          {headFolds.map(([x, w, c]) => <path key={x} d={`M${x} 875h${w}l6 260h-${w}z`} fill={c} />)}
          <path d="M330 875H1060V1140H335z" fill="url(#fadeDown)" opacity=".6" />
        </g>
        <path d="M1050 875H1405C1410 930 1400 990 1380 1030H1060z" fill="url(#headR)" />
        <path d="M1050 875H1405V1030H1060z" fill="url(#fadeDown)" opacity=".6" />
        <ellipse cx="1100" cy="905" rx="46" ry="60" fill="url(#glint)" opacity=".6" />
        <Pave />
        {[[368, 1125, 36], [548, 1085, 16], [652, 1080, 14], [708, 1085, 16], [830, 1070, 18], [952, 1060, 14], [1016, 1060, 16]].map(([x, y, w]) => (
          <rect key={x} x={x - w / 2} y={y - 70} width={w} height="80" rx="8" fill="#000088" />
        ))}

        <path d="M498 205H604V588H498z" fill="url(#shank)" />
        <path d="M604 205H710V588H604z" fill="url(#shank)" />
        <path d="M498 205H604V588H498zM604 205H710V588H604z" fill="url(#shade)" />
        <g clipPath="url(#shankClip)" filter="url(#soft)">
          <path d="M520 470H560L600 490V588H520z" fill="#5c5cff" />
          <path d="M606 470H640L670 500V588H606z" fill="#5c5cff" />
          <path d="M524 485L545 500V575H528z" fill="#e0e0ff" />
          <path d="M608 485L628 505V575H608z" fill="#e0e0ff" />
        </g>
        <path d="M604 240V586" stroke="#000090" strokeWidth="4" />
        <path d="M497 588H715V875H497z" fill="#3a3aff" />
        <path d="M500 588H712V606H500z" fill="#0808c8" />
        <path d="M500 606H712V632H500z" fill="#5a5aff" />

        <path d={leftArch} fill="url(#archL)" />
        <g clipPath="url(#archLClip)">
          <path d="M560 40C490 90 455 160 435 250C415 340 410 430 408 535L394 890" fill="none" stroke="#000020" strokeWidth="30" filter="url(#soft)" />
          <path d="M258 875L266 535C274 400 288 300 314 215" fill="none" stroke="#000080" strokeWidth="14" filter="url(#soft)" />
          <path d="M336 300C306 400 296 520 292 700L300 840C330 700 356 560 358 440z" fill="#6868ff" filter="url(#soft)" />
          <path d="M330 350C306 430 300 520 298 680C326 600 346 500 344 410z" fill="#f4f4ff" opacity=".85" filter="url(#soft)" />
        </g>
        <path d={rightArch} fill="url(#archR)" />
        <g clipPath="url(#archRClip)">
          <path d="M603 210C600 120 613 50 700 44" fill="none" stroke="#000060" strokeWidth="16" filter="url(#soft)" />
          <path d="M600 210C640 130 700 140 745 225C785 310 800 420 806 535L833 900" fill="none" stroke="#000060" strokeWidth="12" filter="url(#soft)" />
          <path d="M885 190C928 300 938 410 944 535L952 890" fill="none" stroke="#000070" strokeWidth="26" filter="url(#soft)" />
          <path d="M818 290C832 400 836 520 850 780C880 700 896 600 886 520C878 440 850 360 818 290z" fill="#6868ff" filter="url(#soft)" />
          <path d="M824 340C834 430 838 520 852 670C872 600 872 520 862 460C852 400 840 370 824 340z" fill="#f4f4ff" opacity=".85" filter="url(#soft)" />
        </g>
        <path d="M870 928H932L925 1025H880z" fill="#0808e8" />
        <ellipse cx="902" cy="965" rx="20" ry="48" fill="url(#glint)" opacity=".8" />
      </g>

      {/* orientation widget */}
      <g fill="none" stroke="#dca455" strokeWidth="1.500">
        <rect x="1852.500" y="200" width="37" height="14.500" rx="6" />
        <path d="M1857 203.500h28M1857 211h28M1856.500 201v12M1885.500 201v12" />
        <path d="M1864 203l3-3h8l3 3-7 16z" fill="#50648c" stroke="#6c88b4" strokeWidth="1" />
        <path d="M1865 205h12M1868 202v7M1871 200v15M1874 202v7" stroke="#2c3e60" strokeWidth="1" />
      </g>
    </svg>
  )
}

function Taskbar() {
  return (
    <div className="flex h-10 w-[1920px] shrink-0 bg-[#1f1f22] text-white">
      <div className="flex h-10 items-center pl-4">
        <svg width="16" height="16" viewBox="0 0 16 16" fill="#fff"><path d="M0 2.300l6.500-.9v6.100H0zM7.300 1.300L16 0v7.500H7.300zM0 8.300h6.500v6.100L0 13.500zM7.300 8.300H16V16l-8.700-1.300z" /></svg>
        <svg width="16" height="16" viewBox="0 0 16 16" className="ml-8"><circle cx="8" cy="8" r="6.500" fill="none" stroke="#fff" strokeWidth="2" /></svg>
        <svg width="25" height="25" viewBox="0 0 25 25" className="ml-[30px]">
          <path d="M1 11C2 4 7 0 13 0c7 0 12 5 12 11 0 4-3 6-6 6-4 0-5-2-4-4 1-4-2-6-5-6-4 0-8 2-9 4z" fill="#3ecb8c" />
          <path d="M1 11C2 4 7 0 13 0c3 0 5 1 7 3-5-1-9 1-11 4-4 0-7 2-8 4z" fill="#38b0e8" />
          <path d="M9 7c-4 5-2 13 4 16 4 2 9 0 11-4-5 3-11 1-12-5 0-3 1-5 0-6z" fill="#1660b4" />
          <path d="M1 11c2-3 5-4 8-4-3 4-3 11 4 16C5 24 0 18 1 11z" fill="#1e86d4" />
          <path d="M0 16h12v8H0z" fill="#c46c14" /><path d="M4 16v-2h4v2M0 19h12" fill="none" stroke="#7c3e06" /><path d="M5 18.500h2v2H5z" fill="#ffd070" />
        </svg>
        <svg width="24" height="24" viewBox="0 0 24 24" className="ml-6"><path d="M6.500 6V2h11v4" fill="none" stroke="#3aa0d8" strokeWidth="2" /><rect x=".5" y="4.500" width="23" height="19" rx="3" fill="#f3f3f3" /><path d="M7.500 9.500h4v4h-4z" fill="#d8642c" /><path d="M12.700 9.500h4v4h-4z" fill="#7ca834" /><path d="M7.500 14.700h4v4h-4z" fill="#3c9cc8" /><path d="M12.700 14.700h4v4h-4z" fill="#e0b030" /></svg>
        <svg width="24" height="24" viewBox="0 0 24 24" className="ml-[25px]"><path d="M0 8l12-8 12 8v4H0z" fill="#14589c" /><path d="M0 8h24v15H0z" fill="#2c98dc" /><path d="M1 8h22l-11 8z" fill="#f4f8fc" /><path d="M0 23V8l14 9z" fill="#48b8f0" /></svg>
        <svg width="25" height="24" viewBox="0 0 25 24" className="ml-[25px]">
          <path d="M1 14C1 8 8 3 14 4c5 1 8 4 7 9-1 6-6 9-11 9-3 0-2-3-4-4-3 0-5-1-5-4z" fill="#dce6ee" />
          <circle cx="7" cy="9" r="1.800" fill="#c43c3c" /><circle cx="12" cy="7" r="1.800" fill="#3c9c4c" /><circle cx="5" cy="14" r="1.800" fill="#3c74c8" /><circle cx="10" cy="16.500" r="2.500" fill="#252530" />
          <path d="M21 1l-5 12-1 10 4-9 4-11z" fill="#d09c54" /><path d="M18 1l5 1 1 3-5-1z" fill="#8c5c34" />
        </svg>
        <svg width="23" height="20" viewBox="0 0 23 20" className="ml-[25px]"><path d="M1 1h8l2 2h11v4H1z" fill="#d8a02c" /><path d="M1 4h21v14H1z" fill="#f8d468" /><path d="M5 19v-8h13v8h-4v-4H9v4z" fill="#4c90a8" /></svg>
        <div className="ml-[14px] flex h-10 w-12 items-center justify-center border-b-2 border-[#a8d8ec] bg-[#4b4b50]">
          <svg width="24" height="24" viewBox="0 0 24 24" fill="none" stroke="#e0f6ff"><circle cx="12" cy="12" r="11.500" fill="#3ba4c4" stroke="none" /><path d="M1.500 9l3.500 8L8.500 9" /><circle cx="10.500" cy="16.500" r=".5" fill="#fff" /><circle cx="17" cy="13.500" r="4.500" /><circle cx="16" cy="6" r="2.800" /></svg>
        </div>
      </div>
      <div className="ml-auto flex h-10 items-center font-['Open_Sans'] text-[11.500px] text-[#e4e4e4]">
        <span className="w-[50px] text-[11.500px] tracking-[-0.2px]">Desktop</span>
        <svg width="9" height="7" viewBox="0 0 9 7" className="mb-[20px]" fill="none" stroke="#fff" strokeWidth="1.500"><path d="M1 .5l3 3-3 3M5 .5l3 3-3 3" /></svg>
        <svg width="16" height="16" viewBox="0 0 16 16" className="ml-[23px]" fill="none" stroke="#eee" strokeWidth="1.200"><circle cx="10.500" cy="4" r="3" /><circle cx="5" cy="8" r="2.500" /><path d="M1 15c0-6 8-6 8 0M9 8c4-2 6 1 6 4" /></svg>
        <svg width="24" height="16" viewBox="0 0 24 16" className="ml-[84px]" fill="none" stroke="#fff" strokeWidth="1.500"><path d="M1 1h19v14H2.500Q1 15 1 13zM20 4h3v9q0 2-2 2h-2" /><path d="M4 5h13M12 8.500h5M12 11.500h5M4 8.500h5v3.500H4z" /></svg>
        <span className="ml-2 w-[106px] pt-0.5 font-['Noto_Sans'] text-[13.500px] tracking-[-0.1px] whitespace-pre">28°C  Có nắng</span>
        <svg width="12" height="8" viewBox="0 0 12 8" fill="none" stroke="#eee" strokeWidth="1.300"><path d="M.5 7L6 1.500 11.500 7" /></svg>
        <svg width="17" height="14" viewBox="0 0 17 14" className="ml-[10px]" fill="none" stroke="#eee"><path d="M5 3h11v7H4.500V7M10 10v3M6 13h8M1 1h4v5H1zM3 6v7" /></svg>
        <svg width="17" height="14" viewBox="0 0 17 14" className="ml-[7px]"><path d="M4 11c-5-1-4-6 0-6 1-5 8-5 9-1 4 0 4 6 1 7z" fill="#1c6cb8" /><circle cx="12" cy="9.500" r="4.200" fill="#e6f0f6" /><path d="M10 9c1-2 3-2 4 0M14 10.500c-1 1.500-3 1.500-4 0" fill="none" stroke="#1c5c90" strokeWidth="1.200" /></svg>
        <svg width="17" height="14" viewBox="0 0 17 14" className="ml-[7px]" fill="none" stroke="#eee"><path d="M1 5h2l4-4v12L3 9H1zM9.500 5q1.500 2 0 4M11.500 3.500q2.500 3.500 0 7" /><path d="M13.700 2q4 5 0 10" stroke="#777" /></svg>
        <svg width="18" height="16" viewBox="0 0 18 16" className="ml-[10px]" fill="none" stroke="#eee" strokeWidth="1.200"><path d="M6 11L13 1.500q3 0 2.500 2.500L8 12.500zM6 11l-1 3 3-1.500M6 7C2 6 0 10 3 12c3 2 10 0 13-3" /></svg>
        <svg width="23" height="13" viewBox="0 0 23 13" className="ml-[10px]" fill="none" stroke="#eee"><path d="M.5.5h22v12H.5z" /><path d="M3 3.500h17M3 6.500h17" strokeDasharray="1.500 1.500" /><path d="M6 9.500h11M3 9.500h1.500M18.500 9.500H20" /></svg>
        <div className="ml-[7px] w-[60px] text-center text-[12px] leading-[18px] tracking-[-0.45px]"><div>8:59 AM</div><div>3/26/2024</div></div>
        <svg width="26" height="26" viewBox="0 0 26 26" className="ml-[14px]"><path d="M1 1h16v12H8l-3 4v-4H1z" fill="#fff" /><path d="M4 4.500h10M4 7h10M4 9.500h7" stroke="#1f1f22" /><circle cx="16" cy="18" r="7.500" fill="#3a3a3e" stroke="#999" /><text x="16" y="22" fontSize="11" fill="#fff" textAnchor="middle">2</text></svg>
        <div className="ml-[9px] h-10 w-[6px] border-l border-[#666]" />
      </div>
    </div>
  )
}

export default function App() {
  return (
    <div className="flex h-[1080px] w-[1920px] flex-col overflow-hidden bg-[#333] font-['DejaVu_Sans',Verdana,sans-serif]">
      <header className="flex h-[23px] shrink-0 items-center bg-white pl-[2px]">
        <svg width="16" height="16" viewBox="0 0 16 16" fill="none" stroke="#9fe0f0"><circle cx="8" cy="8" r="7.800" fill="#2a9cba" stroke="none" /><path d="M2.500 6l2 5 2-5" strokeWidth=".8" /><circle cx="10.500" cy="9.500" r="2.500" strokeWidth=".8" /><circle cx="10.500" cy="5" r="1.800" strokeWidth=".8" /></svg>
        <span className="ml-[5px] font-['Open_Sans'] text-[12px] tracking-[-0.36px] text-[#979797]">Matrix 8.0 (64-bit) - 7939.3dm</span>
        <svg width="102" height="12" viewBox="0 0 102 12" className="mr-[19px] mb-[2px] ml-auto" fill="none" stroke="#888"><path d="M0 6.500h11M46.500 3.500h7v7h-7zM48.500 3V1.500h7v7H54M91.500 1l10 10M101.500 1l-10 10" /></svg>
      </header>
      <nav className="flex h-[22px] shrink-0 items-center bg-[#e6e6e6] pl-1.5 font-['Liberation_Sans'] text-[11px] tracking-[-0.14px] text-black">
        {menus.map(([label, w]) => <span key={label} className="shrink-0 whitespace-nowrap" style={{ width: w }}>{label}</span>)}
      </nav>
      <main className="flex h-[995px] shrink-0">
        <aside className="flex w-[300px] shrink-0 flex-col overflow-hidden bg-[#333]">
          <div className="h-[2px] shrink-0 bg-[#555]" />
          <SectionBar title="SNAPS" />
          <Snaps />
          <div className="h-px shrink-0" />
          <SectionBar title="INFO & SETTINGS" />
          <InfoSettings />
          <SectionBar title="LAYERS" />
          <Layers />
          <MetalWeights />
          <GemReporter />
        </aside>
        <section className="flex w-[1620px] flex-col border-t border-l-2 border-[#f4f4f4] bg-[#b1b3b3] pt-[5px] pl-[5px]">
          <CommandPanel />
          <Tabs />
          <div className="relative ml-px h-[865px] w-[1604px] overflow-hidden bg-black">
            <RingModel />
            <div className="relative flex h-[18px] w-[104px] items-center rounded-br bg-[#43b3da] font-['Open_Sans'] text-[11.500px] text-[#122c3c]">
              <span className="w-[93px] pl-[9px] whitespace-nowrap">Looking Down</span>
              <div className="flex h-[15px] w-[11px] items-center justify-center border-l border-[#122c3c]"><i className="border-x-[3px] border-t-[4px] border-x-transparent border-t-[#0c1c28]" /></div>
            </div>
          </div>
        </section>
      </main>
      <Taskbar />
    </div>
  )
}
